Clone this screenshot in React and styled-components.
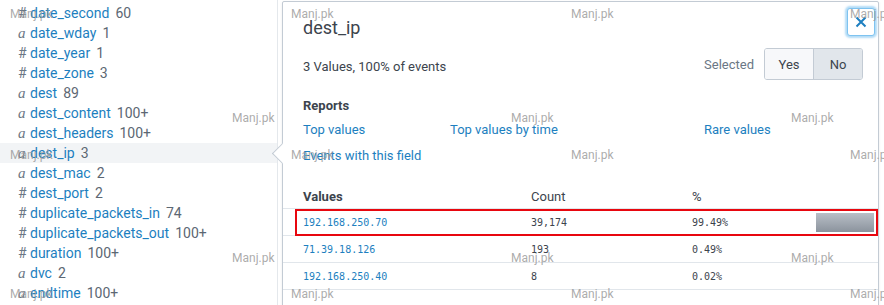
import React from 'react';
import styled, { createGlobalStyle } from 'styled-components';

const Global = createGlobalStyle`
  html, body { margin: 0; padding: 0; background: #fff; }
  body { font-family: Roboto, "Liberation Sans", sans-serif; color: #3c444d; }
`;

const Page = styled.div`
  position: relative;
  width: 884px;
  height: 305px;
  overflow: hidden;
  background: #fff;
`;

const Sidebar = styled.div`
  width: 278px;
  height: 305px;
  border-right: 1px solid #e4e8ec;
  padding-top: 3px;
  box-sizing: border-box;
`;

const Field = styled.div`
  display: flex;
  align-items: center;
  height: 20px;
  padding-left: 18px;
  font-size: 14px;
  background: ${p => (p.$active ? '#f2f4f6' : 'transparent')};
`;

const TypeIcon = styled.span`
  width: 12px;
  color: #6b7785;
  font-family: ${p => (p.$kind === 'a' ? '"Liberation Serif", serif' : 'Roboto, sans-serif')};
  font-style: ${p => (p.$kind === 'a' ? 'italic' : 'normal')};
  font-size: ${p => (p.$kind === 'a' ? '15px' : '14px')};
`;

const FieldName = styled.span`
  color: #1d7fc0;
  margin-right: 6px;
`;

const FieldCount = styled.span`
  color: #5c6773;
`;

const Popover = styled.div`
  position: absolute;
  left: 282px;
  top: 1px;
  width: 597px;
  height: 320px;
  background: #fff;
  border: 1px solid #c3cbd4;
  border-radius: 2px;
  box-shadow: 0 1px 3px rgba(0, 0, 0, 0.08);
  box-sizing: border-box;

  &::before {
    content: '';
    position: absolute;
    left: -8px;
    top: 144px;
    width: 14px;
    height: 14px;
    background: #fff;
    border-left: 1px solid #c3cbd4;
    border-bottom: 1px solid #c3cbd4;
    transform: rotate(45deg);
  }
`;

const Body = styled.div`
  position: relative;
  padding: 14px 15px 0 20px;
`;

const Title = styled.h2`
  margin: 0;
  font-size: 18px;
  font-weight: 400;
  line-height: 24px;
  color: #3c444d;
`;

const Close = styled.button`
  position: absolute;
  top: 6px;
  right: 3px;
  width: 28px;
  height: 28px;
  padding: 0;
  border: 1px solid #7ec3f0;
  border-radius: 3px;
  background: #fff;
  box-shadow: 0 0 2px 2px rgba(126, 195, 240, 0.6);
  display: flex;
  align-items: center;
  justify-content: center;
`;

const Summary = styled.div`
  display: flex;
  align-items: center;
  justify-content: space-between;
  margin-top: 10px;
  height: 32px;
  font-size: 13px;
`;

const SelectGroup = styled.div`
  display: flex;
  align-items: center;
  gap: 10px;
  margin-top: -4px;
`;

const Muted = styled.span`
  color: #6b7785;
  font-size: 13px;
`;

const Toggle = styled.div`
  display: flex;
  border: 1px solid #c3cbd4;
  border-radius: 3px;
  overflow: hidden;
  height: 30px;
`;

const ToggleBtn = styled.div`
  width: 48px;
  display: flex;
  align-items: center;
  justify-content: center;
  font-size: 13px;
  color: #3c444d;
  background: ${p => (p.$on ? '#e1e6eb' : '#f7f8fa')};
  border-left: ${p => (p.$on ? '1px solid #c3cbd4' : 'none')};
`;

const SectionTitle = styled.div`
  margin-top: 16px;
  font-size: 13px;
  font-weight: 700;
  line-height: 16px;
`;

const Links = styled.div`
  display: grid;
  grid-template-columns: 147px 254px 1fr;
  row-gap: 10px;
  margin-top: 8px;
  font-size: 13px;
  line-height: 16px;
`;

const Link = styled.a`
  color: #1d7fc0;
  text-decoration: none;
`;

const Table = styled.div`
  margin: 20px -15px 0 -20px;
  font-size: 13px;
`;

const Row = styled.div`
  position: relative;
  display: grid;
  grid-template-columns: 228px 161px 124px 58px;
  align-items: center;
  height: ${p => (p.$head ? '24px' : '26px')};
  padding-left: 20px;
  border-bottom: 1px solid #e1e6eb;
  font-family: ${p => (p.$head ? 'Roboto, sans-serif' : '"DejaVu Sans Mono", monospace')};
  font-size: ${p => (p.$head ? '13px' : '10px')};

  ${p => p.$marked && `
    &::after {
      content: '';
      position: absolute;
      left: 12px;
      right: 0;
      top: 0;
      bottom: -1px;
      border: 2px solid #e8070f;
    }
  `}
`;

const HeadCell = styled.span`
  font-weight: ${p => (p.$bold ? 700 : 400)};
  color: #3c444d;
`;

const Value = styled.span`
  color: #1d7fc0;
`;

const Cell = styled.span`
  color: #3c444d;
`;

const Bar = styled.div`
  height: 19px;
  background: linear-gradient(#b9bfc7, #8b939d);
`;

const Mark = styled.span`
  position: absolute;
  left: ${p => p.$x}px;
  top: ${p => p.$y}px;
  font-family: Roboto, sans-serif;
  font-size: 12px;
  color: rgba(150, 150, 150, 0.8);
  pointer-events: none;
  white-space: nowrap;
`;

const fields = [
  ['#', 'date_second', '60'],
  ['a', 'date_wday', '1'],
  ['#', 'date_year', '1'],
  ['#', 'date_zone', '3'],
  ['a', 'dest', '89'],
  ['a', 'dest_content', '100+'],
  ['a', 'dest_headers', '100+'],
  ['a', 'dest_ip', '3'],
  ['a', 'dest_mac', '2'],
  ['#', 'dest_port', '2'],
  ['#', 'duplicate_packets_in', '74'],
  ['#', 'duplicate_packets_out', '100+'],
  ['#', 'duration', '100+'],
  ['a', 'dvc', '2'],
  ['a', 'endtime', '100+'],
];

const values = [
  ['192.168.250.70', '39,174', '99.49%', true],
  ['71.39.18.126', '193', '0.49%', false],
  ['192.168.250.40', '8', '0.02%', false],
];

const marks = [];
[7, 148, 287].forEach(y => [10, 291, 571, 850].forEach(x => marks.push([x, y])));
[111, 251].forEach(y => [232, 511, 791].forEach(x => marks.push([x, y])));

export default function App() {
  return (
    <Page>
      <Global />
      <Sidebar>
        {fields.map(([kind, name, count]) => (
          <Field key={name} $active={name === 'dest_ip'}>
            <TypeIcon $kind={kind}>{kind}</TypeIcon>
            <FieldName>{name}</FieldName>
            <FieldCount>{count}</FieldCount>
          </Field>
        ))}
      </Sidebar>

      <Popover>
        <Body>
          <Title>dest_ip</Title>
          <Close>
            <svg width="12" height="12" viewBox="0 0 12 12">
              <path d="M1.5 1.5 L10.5 10.5 M10.5 1.5 L1.5 10.5" stroke="#1d7fc0" strokeWidth="2" />
            </svg>
          </Close>

          <Summary>
            <span>3 Values, 100% of events</span>
            <SelectGroup>
              <Muted>Selected</Muted>
              <Toggle>
                <ToggleBtn>Yes</ToggleBtn>
                <ToggleBtn $on>No</ToggleBtn>
              </Toggle>
            </SelectGroup>
          </Summary>

          <SectionTitle>Reports</SectionTitle>
          <Links>
            <Link>Top values</Link>
            <Link>Top values by time</Link>
            <Link>Rare values</Link>
            <Link>Events with this field</Link>
          </Links>

          <Table>
            <Row $head>
              <HeadCell $bold>Values</HeadCell>
              <HeadCell>Count</HeadCell>
              <HeadCell>%</HeadCell>
              <span />
            </Row>
            {values.map(([ip, count, pct, marked]) => (
              <Row key={ip} $marked={marked}>
                <Value>{ip}</Value>
                <Cell>{count}</Cell>
                <Cell>{pct}</Cell>
                {marked ? <Bar /> : <span />}
              </Row>
            ))}
          </Table>
        </Body>
      </Popover>

      {marks.map(([x, y]) => (
        <Mark key={`${x}-${y}`} $x={x} $y={y}>Manj.pk</Mark>
      ))}
    </Page>
  );
}
